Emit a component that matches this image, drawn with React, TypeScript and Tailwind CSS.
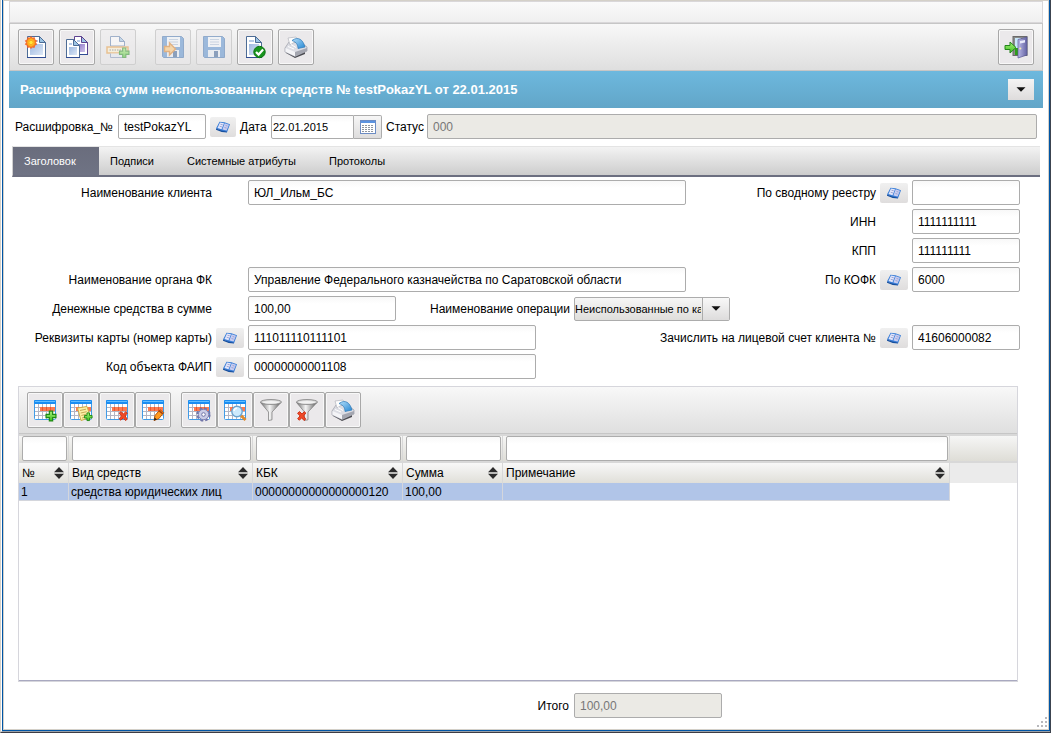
import type { ReactNode } from "react";

/* ---------- icons ---------- */

function Icon({ children, faded }: { children: ReactNode; faded?: boolean }) {
  return (
    <svg width="24" height="24" viewBox="0 0 24 24" aria-hidden="true" className={faded ? "opacity-50" : ""}>
      {children}
    </svg>
  );
}

function Gradients() {
  return (
    <svg width="0" height="0" className="absolute" aria-hidden="true">
      <defs>
        <linearGradient id="sheet" x1="0" y1="0" x2="1" y2="1">
          <stop offset="0" stopColor="#9db8e0" />
          <stop offset="1" stopColor="#dde8f7" />
        </linearGradient>
        <linearGradient id="violet" x1="0" y1="0" x2="1" y2="1">
          <stop offset="0" stopColor="#8d74c8" />
          <stop offset="1" stopColor="#cfc4ea" />
        </linearGradient>
        <linearGradient id="metal" x1="0" y1="0" x2="1" y2="0">
          <stop offset="0" stopColor="#6e6e6e" />
          <stop offset="0.45" stopColor="#f4f4f4" />
          <stop offset="1" stopColor="#5e5e5e" />
        </linearGradient>
        <linearGradient id="dome" x1="0" y1="0" x2="1" y2="1">
          <stop offset="0" stopColor="#b5e0fb" />
          <stop offset="1" stopColor="#2486d2" />
        </linearGradient>
        <linearGradient id="door" x1="0" y1="0" x2="1" y2="0">
          <stop offset="0" stopColor="#b9b8e6" />
          <stop offset="1" stopColor="#6463a4" />
        </linearGradient>
        <linearGradient id="leaf" x1="0" y1="0" x2="0" y2="1">
          <stop offset="0" stopColor="#a6f07a" />
          <stop offset="1" stopColor="#3fbf1f" />
        </linearGradient>
        <radialGradient id="burst">
          <stop offset="0" stopColor="#ffef4a" />
          <stop offset="0.45" stopColor="#ffc21f" />
          <stop offset="1" stopColor="#f4581b" />
        </radialGradient>
      </defs>
    </svg>
  );
}

function Plus({ x, y, s = 1 }: { x: number; y: number; s?: number }) {
  return (
    <path
      transform={`translate(${x} ${y}) scale(${s})`}
      d="M3.500 .5h3v3h3v3h-3v3h-3v-3h-3v-3h3z"
      fill="url(#leaf)"
      stroke="#1f8a17"
      strokeWidth="1.100"
    />
  );
}

function Cross({ x, y }: { x: number; y: number }) {
  return (
    <path
      transform={`translate(${x} ${y})`}
      d="M.6 2.200 2.600.6 4.900 3 7.300.7 8.800 2 6.600 4.900 8.700 8.200 7 9.500 4.700 6.800 2.400 9.200.7 7.800 3 4.900z"
      fill="#f04a28"
      stroke="#cf3216"
    />
  );
}

function Page({
  x,
  y,
  w = 17,
  h = 20,
  tone = "#4d6c96",
  fill = "url(#sheet)",
}: {
  x: number;
  y: number;
  w?: number;
  h?: number;
  tone?: string;
  fill?: string;
}) {
  return (
    <g transform={`translate(${x} ${y})`}>
      <path d={`M.5 .5H${w - 5.5}L${w + 0.5} 6.500V${h + 0.5}H.5z`} fill="#fff" stroke={tone} />
      <path d={`M0 ${h + 0.5}H${w + 1}`} stroke="#2f4c94" />
      <rect x="3" y="4" width={w - 10} height="2" fill="#b8cbe8" />
      <rect x="3" y="8" width={w - 5} height={h - 10} fill={fill} />
      <path d={`M${w - 5.5} .5V6.500H${w + 0.5}z`} fill="#9cc4e4" stroke={tone} />
    </g>
  );
}

const NewDocIcon = () => (
  <Icon>
    <Page x={3} y={1} w={18} h={21} />
    <path
      d="m7 1.500 1.400 1.600 2.100-.4.200 2.100 1.900.9-1 1.800 1 1.900-2 .9-.3 2.100-2-.4L7 13.500 5.600 12l-2.100.4-.2-2.100-1.900-.9 1-1.900-1-1.800 2-.9.300-2.100 2 .4z"
      fill="url(#burst)"
      stroke="#f2602a"
      strokeWidth=".8"
    />
    <circle cx="7" cy="7.500" r="2.200" fill="#ffe63a" stroke="#fb9b1c" strokeWidth=".8" />
  </Icon>
);

const CopyDocIcon = () => (
  <Icon>
    <Page x={9} y={1} w={13} h={18} tone="#5d4290" fill="url(#violet)" />
    <Page x={1} y={4} w={13} h={18} />
  </Icon>
);

const AddPrintIcon = () => (
  <Icon faded>
    <path d="M4.500 11V1.500h9l5 5V11z" fill="#fff" stroke="#5577a8" />
    <path d="M13.500 1.500v5h5z" fill="#9cc4e4" stroke="#5577a8" />
    <path d="M1 12h21v6H1z" fill="#fff3cf" stroke="#e89a3c" strokeWidth="1.500" />
    <path d="M3.500 15h16" stroke="#9a9a90" strokeWidth="1.500" strokeDasharray="1.500 1" />
    <path d="M4.500 18.500v4h14v-4" fill="#e4ebf5" stroke="#7a8fb5" />
    <Plus x={13} y={12.500} s={1.050} />
  </Icon>
);

function Floppy() {
  return (
    <>
      <path d="M1.500 1.500h19l2 2v19h-20l-1-1z" fill="#4e88cc" stroke="#3a6cab" />
      <rect x="6" y="2" width="13" height="10" fill="#f4f8fd" />
      <path d="M8 4.500h9M8 7h9M8 9.500h9" stroke="#a9bdd8" />
      <rect x="6" y="15" width="12" height="7" fill="#e9eff7" />
      <rect x="12" y="16" width="4" height="6" fill="#2e588f" />
    </>
  );
}

const SaveAsIcon = () => (
  <Icon faded>
    <Floppy />
    <path d="M3.500 11.500h5V8l6 6-6 6v-3.500h-5z" fill="#ffc46b" stroke="#d97a1c" strokeWidth="1.400" />
  </Icon>
);

const SaveIcon = () => (
  <Icon faded>
    <Floppy />
  </Icon>
);

const CheckDocIcon = () => (
  <Icon>
    <Page x={3} y={1} w={15} h={21} />
    <circle cx="16.500" cy="17" r="5.700" fill="#18941d" stroke="#0c7312" />
    <path d="m13 17 2.600 2.600 4.500-5" fill="none" stroke="#fff" strokeWidth="2.200" />
  </Icon>
);

const PrinterIcon = () => (
  <Icon>
    <path d="m2 16 9 5 10-5v3l-10 4-9-5z" fill="#4a4a50" />
    <path d="m1 13 4-6L18 8l5 4v4l-12 5.500L1 17z" fill="#dcdde4" stroke="#9a9ca6" strokeWidth=".7" />
    <path d="m1.500 13 9.500 4v4.200l-9.500-4.500z" fill="#f4f4f7" />
    <path d="m11 17 12-4v3l-12 5.200z" fill="#a4a6b0" />
    <path d="m4 3 8-1 2 3-8 5z" fill="#fdfdfd" stroke="#b3b5bd" strokeWidth=".7" />
    <path d="M8 5.500c6-4.500 11-1 13 6.500l-7 1.500c0-4-2-6.500-6-8z" fill="url(#dome)" stroke="#2c79b8" strokeWidth=".7" />
    <path d="m4 11.500 6 2.500M7 9.500l5 3" stroke="#fff" />
  </Icon>
);

const ExitIcon = () => (
  <Icon>
    <rect x="9" y="1.500" width="14" height="19" fill="#8b8b8b" stroke="#6a6a6a" />
    <rect x="11" y="3" width="6" height="10" fill="#c8e8fb" />
    <rect x="11" y="13" width="6" height="7" fill="#2f9e1b" />
    <path d="M14 4.500 23 2v18l-9 3z" fill="url(#door)" stroke="#5a5994" strokeWidth=".7" />
    <path d="m16 6 5-1v2.500l-5 1z" fill="#e8e9fb" />
    <circle cx="16.300" cy="13.500" r="1.100" fill="#f5e9b0" />
    <path d="M1 10.500h5V7l6 5.500L6 18v-3.500H1z" fill="url(#leaf)" stroke="#23851a" />
  </Icon>
);

function Sheet({ children }: { children?: ReactNode }) {
  return (
    <Icon>
      <rect x="1.500" y="2.500" width="21" height="19" rx="1" fill="#fff" stroke="#3f9be8" />
      <path d="M2 9.500h20M2 13.500h20M2 17.500h20M5.500 6v15M9.500 6v15M13.500 6v15M17.500 6v15" stroke="#b4b5c4" />
      <rect x="7" y="9" width="15" height="4" fill="#ff7a4e" />
      <path d="M9.500 9v4M13.500 9v4M17.500 9v4" stroke="#e95a30" />
      <rect x="1" y="2" width="22" height="4" rx="1" fill="#1a8df2" />
      <path d="M2 3.500h20" stroke="#62bdff" />
      {children}
    </Icon>
  );
}

const RowAddIcon = () => (
  <Sheet>
    <Plus x={12.500} y={12.500} s={1.100} />
  </Sheet>
);

const RowCopyIcon = () => (
  <Sheet>
    <path d="m8.500 10 9.500-1.500 3.500 11-9.500 3z" fill="#fdf0a6" stroke="#cfae48" />
    <path d="m11 12.500 6-1.300M11.700 15l6-1.300M12.400 17.500l5-1.300M13 20l3-.8" stroke="#c8ab58" />
    <Plus x={15} y={14.500} s={0.850} />
  </Sheet>
);

const RowDeleteIcon = () => (
  <Sheet>
    <Cross x={13.500} y={13} />
  </Sheet>
);

const RowEditIcon = () => (
  <Sheet>
    <path d="m13 22.500 1-5 5-5.800 3.700 3-4.900 6z" fill="#ff9a1f" stroke="#b4560d" />
    <path d="m13 22.500.6-3 2.400 2z" fill="#222" />
    <path d="m18 12.800 3.700 3" stroke="#a03a10" strokeWidth="1.400" />
  </Sheet>
);

const TableSettingsIcon = () => (
  <Sheet>
    <circle cx="16.500" cy="16.500" r="5.600" fill="none" stroke="#7175a8" strokeWidth="3" strokeDasharray="2.600 1.800" />
    <circle cx="16.500" cy="16.500" r="5.200" fill="#c9cce6" stroke="#7f83b4" />
    <circle cx="16.500" cy="16.500" r="1.800" fill="#fff" stroke="#7175a8" />
  </Sheet>
);

const TableSearchIcon = () => (
  <Sheet>
    <path d="m18 17.500 4.500 4.500" stroke="#e08a2c" strokeWidth="2.800" />
    <circle cx="14" cy="13.500" r="5.200" fill="#cdeafd" stroke="#6da4cf" strokeWidth="1.400" />
    <path d="M11 13a3 3 0 0 1 3-2.700" stroke="#fff" strokeWidth="1.400" fill="none" />
  </Sheet>
);

function Funnel() {
  return (
    <>
      <path d="M1.500 4.500 9.500 14v8.500l3.500-.7V14l9-9.500z" fill="url(#metal)" stroke="#777" strokeWidth=".7" />
      <ellipse cx="12" cy="4" rx="10.500" ry="2.400" fill="#dedede" stroke="#777" strokeWidth=".8" />
      <ellipse cx="12" cy="4.300" rx="8" ry="1.300" fill="#f2f2f2" />
    </>
  );
}

const FilterIcon = () => (
  <Icon>
    <Funnel />
  </Icon>
);

const FilterClearIcon = () => (
  <Icon>
    <Funnel />
    <Cross x={2} y={13} />
  </Icon>
);

const BookIcon = () => (
  <svg width="16" height="12" viewBox="0 0 16 12" aria-hidden="true">
    <path d="m4.500.8 5 .4 5.500 2-3 8-5-1L1 7.500z" fill="#3b7fd8" />
    <path d="m1 7.500 5.500 2 5 1 .5 1-5.300-.6L1 8.700z" fill="#174f9e" />
    <path d="m5 1.500 4 .8-2.500 6L2.500 7z" fill="#e3e6fa" />
    <path d="m9.700 2.200 4.300 1.600-2.400 5.700-4.200-1z" fill="#c9cdf0" />
    <path d="m5.500 3.300 2.300.5M4.700 5.300l2.300.6M10.500 4.400l2 .7M9.500 6.500l2.100.6" stroke="#8f98cc" strokeWidth=".8" />
  </svg>
);

const CalendarIcon = () => (
  <svg width="16" height="14" viewBox="0 0 16 14" aria-hidden="true">
    <rect x=".5" y=".5" width="15" height="13" fill="#fff" stroke="#6c8cc4" />
    <rect x="1" y="1" width="14" height="2" fill="#5b93e0" />
    <path d="M2 5.500h12M2 7.500h12M2 9.500h12M2 11.500h12" stroke="#8f959e" strokeDasharray="2 1" />
  </svg>
);

const CaretIcon = () => (
  <svg width="10" height="5" viewBox="0 0 10 5" aria-hidden="true">
    <path d="M.5 .3h9L5 4.800z" fill="#111" />
  </svg>
);

const SortIcon = () => (
  <svg width="10" height="12" viewBox="0 0 10 12" aria-hidden="true">
    <path d="M0 5.200 5 0l5 5.200zM0 6.800h10L5 12z" fill="#2b2b2b" />
  </svg>
);

/* ---------- controls ---------- */

function ToolButton({ label, disabled, children }: { label: string; disabled?: boolean; children: ReactNode }) {
  return (
    <button
      type="button"
      aria-label={label}
      disabled={disabled}
      className={
        disabled
          ? "flex size-9 shrink-0 items-center justify-center rounded-xs border border-[#cfcfcf] bg-[#ebe9eb]/60"
          : "flex size-9 shrink-0 items-center justify-center rounded-xs border border-[#a8a8a8] bg-[#ebe9eb] shadow-[inset_0_0_0_1px_#f8f8f8]"
      }
    >
      {children}
    </button>
  );
}

function LookupButton({ label }: { label: string }) {
  return (
    <button
      type="button"
      aria-label={label}
      className="flex h-5 w-full items-center justify-center rounded-xs bg-linear-to-b from-[#f0f0f0] to-[#dfdddd]"
    >
      <BookIcon />
    </button>
  );
}

const field =
  "h-[25px] min-w-0 rounded-xs border border-[#acacac] bg-linear-to-b from-[#f8f8f8] to-white to-30% px-[5px] text-black outline-none";
const fieldDisabled =
  "h-[25px] min-w-0 rounded-xs border border-[#acacac] bg-[#ebeae5] px-[5px] text-[#777] outline-none";

function Cell({
  id,
  label,
  value,
  lookup,
  labelClass,
  inputClass,
}: {
  id: string;
  label: string;
  value: string;
  lookup?: boolean;
  labelClass: string;
  inputClass: string;
}) {
  return (
    <div className="flex items-center gap-1">
      <label htmlFor={id} className={`whitespace-nowrap text-right ${labelClass}`}>
        {label}
      </label>
      <div className="w-7 shrink-0">{lookup && <LookupButton label={`Выбрать: ${label}`} />}</div>
      <input id={id} type="text" defaultValue={value} className={`${field} ${inputClass}`} />
    </div>
  );
}

/* ---------- data ---------- */

const tabs = ["Подписи", "Системные атрибуты", "Протоколы"];

const columns = [
  { title: "№", value: "1" },
  { title: "Вид средств", value: "средства юридических лиц" },
  { title: "КБК", value: "00000000000000000120" },
  { title: "Сумма", value: "100,00" },
  { title: "Примечание", value: "" },
];

const leftLabel = "w-[203px] shrink-0";

/* ---------- page ---------- */

export default function App() {
  return (
    <div className="flex min-h-screen flex-col border-r border-b border-l border-r-[#3c4450] border-b-[#3c3c44] border-l-[#d4d0c8] font-['Liberation_Sans',Arial,sans-serif] text-[12px] leading-4 text-black">
      <Gradients />
      <div className="flex flex-1 flex-col border-b border-l border-b-[#9aa0a8] border-l-white">
        <div className="flex flex-1 flex-col border-x border-b border-[#0055a5]">
          <main className="relative flex flex-1 flex-col border border-[#d4d0c8] bg-white px-[5px] pb-[11px]">
            <div className="h-[22px] shrink-0 border border-[#d9d7d9] bg-linear-to-b from-[#fafafa] to-[#f0f0f0]" />

            <header>
              <div className="flex h-12 items-center gap-[5px] border border-[#c6c6c6] bg-linear-to-b from-[#f8f8f8] to-[#dfdfdf] px-2">
                <ToolButton label="Создать"><NewDocIcon /></ToolButton>
                <ToolButton label="Копировать"><CopyDocIcon /></ToolButton>
                <ToolButton label="Добавить" disabled><AddPrintIcon /></ToolButton>
                <div className="w-[9px]" />
                <ToolButton label="Сохранить и закрыть" disabled><SaveAsIcon /></ToolButton>
                <ToolButton label="Сохранить" disabled><SaveIcon /></ToolButton>
                <ToolButton label="Проверить"><CheckDocIcon /></ToolButton>
                <ToolButton label="Печать"><PrinterIcon /></ToolButton>
                <div className="flex-1" />
                <ToolButton label="Выход"><ExitIcon /></ToolButton>
              </div>
              <div className="flex h-[37px] items-center justify-between bg-linear-to-b from-[#6db8de] to-[#62a6c8] pr-[9px] pl-[11px]">
                <h1 className="text-[13px] font-bold text-white">
                  Расшифровка сумм неиспользованных средств № testPokazYL от 22.01.2015
                </h1>
                <button
                  type="button"
                  aria-label="Меню документа"
                  className="flex h-[21px] w-[26px] items-center justify-center bg-linear-to-b from-[#f4f4f4] to-[#dedcdc]"
                >
                  <CaretIcon />
                </button>
              </div>
            </header>

            <div className="flex h-[37px] items-center gap-1 px-[6px]">
              <label htmlFor="number" className="w-[99px] shrink-0 whitespace-nowrap">Расшифровка_№</label>
              <input id="number" type="text" defaultValue="testPokazYL" className={`${field} w-[88px] shrink-0`} />
              <div className="w-[26px] shrink-0">
                <LookupButton label="Выбрать расшифровку" />
              </div>
              <label htmlFor="date" className="w-[27px] shrink-0">Дата</label>
              <div className="flex shrink-0">
                <input
                  id="date"
                  type="text"
                  defaultValue="22.01.2015"
                  className="h-6 w-[83px] rounded-l-xs border border-[#acacac] bg-linear-to-b from-[#f8f8f8] to-white to-30% px-px text-[11px] outline-none"
                />
                <button
                  type="button"
                  aria-label="Календарь"
                  className="flex h-6 w-7 items-center justify-center rounded-r-xs border border-l-0 border-[#acacac] bg-linear-to-b from-[#f6f6f6] to-[#dedddd]"
                >
                  <CalendarIcon />
                </button>
              </div>
              <label htmlFor="status" className="w-[37px] shrink-0">Статус</label>
              <input id="status" type="text" disabled defaultValue="000" className={`${fieldDisabled} flex-1`} />
            </div>

            <nav className="mt-px mr-[3px] ml-[3px] flex h-[31px] border-t border-b-2 border-l border-t-[#e4e4e4] border-b-[#6c6f80] border-l-[#d0d0d0] bg-linear-to-b from-[#f3f3f3] to-[#cdcdcd] text-[11px]">
              <button type="button" className="w-[86px] bg-linear-to-b from-[#6a6d7d] to-[#6f7384] pl-[11px] text-left text-white">
                Заголовок
              </button>
              {tabs.map((tab) => (
                <button key={tab} type="button" className="pr-[22px] pl-[11px] text-left">
                  {tab}
                </button>
              ))}
            </nav>

            <form className="mt-[3px] flex flex-col gap-1 pr-[23px]">
              <div className="flex justify-between">
                <Cell id="client" label="Наименование клиента" value="ЮЛ_Ильм_БС" labelClass={leftLabel} inputClass="w-[438px]" />
                <Cell id="registry" label="По сводному реестру" value="" lookup labelClass="" inputClass="w-[108px]" />
              </div>
              <div className="flex justify-end">
                <Cell id="inn" label="ИНН" value="1111111111" labelClass="" inputClass="w-[108px]" />
              </div>
              <div className="flex justify-end">
                <Cell id="kpp" label="КПП" value="111111111" labelClass="" inputClass="w-[108px]" />
              </div>
              <div className="flex justify-between">
                <Cell
                  id="treasury"
                  label="Наименование органа ФК"
                  value="Управление Федерального казначейства по Саратовской области"
                  labelClass={leftLabel}
                  inputClass="w-[438px]"
                />
                <Cell id="kofk" label="По КОФК" value="6000" lookup labelClass="" inputClass="w-[108px]" />
              </div>
              <div className="flex items-center">
                <Cell id="sum" label="Денежные средства в сумме" value="100,00" labelClass={leftLabel} inputClass="w-[148px]" />
                <label htmlFor="operation" className="w-[178px] pr-1 text-right whitespace-nowrap">
                  Наименование операции
                </label>
                <div className="relative flex">
                  <select
                    id="operation"
                    className="h-6 w-[156px] appearance-none rounded-xs border border-[#acacac] bg-linear-to-b from-[#f6f6f6] to-[#dfdedb] pr-7 pl-0 text-[11px] outline-none"
                  >
                    <option>Неиспользованные по картам</option>
                  </select>
                  <span className="pointer-events-none absolute inset-y-px right-px flex w-[27px] items-center justify-center border-l border-[#acacac] bg-linear-to-b from-[#f8f8f8] to-[#dddcdc]">
                    <CaretIcon />
                  </span>
                </div>
              </div>
              <div className="flex justify-between">
                <Cell id="card" label="Реквизиты карты (номер карты)" value="111011110111101" lookup labelClass={leftLabel} inputClass="w-[288px]" />
                <Cell id="account" label="Зачислить на лицевой счет клиента №" value="41606000082" lookup labelClass="" inputClass="w-[108px]" />
              </div>
              <div className="flex">
                <Cell id="faip" label="Код объекта ФАИП" value="00000000001108" lookup labelClass={leftLabel} inputClass="w-[288px]" />
              </div>
            </form>

            <section className="mt-[7px] mr-[25px] ml-[9px] flex flex-1 flex-col border border-[#d6d6dc]">
              <div className="flex h-[47px] shrink-0 items-center gap-[10px] border-b border-[#c6c6c6] bg-linear-to-b from-[#f8f8f8] to-[#dfdfdf] pl-2">
                <div className="flex">
                  <ToolButton label="Добавить строку"><RowAddIcon /></ToolButton>
                  <ToolButton label="Копировать строку"><RowCopyIcon /></ToolButton>
                  <ToolButton label="Удалить строку"><RowDeleteIcon /></ToolButton>
                  <ToolButton label="Изменить строку"><RowEditIcon /></ToolButton>
                </div>
                <div className="flex">
                  <ToolButton label="Настройка таблицы"><TableSettingsIcon /></ToolButton>
                  <ToolButton label="Поиск"><TableSearchIcon /></ToolButton>
                  <ToolButton label="Фильтр"><FilterIcon /></ToolButton>
                  <ToolButton label="Сбросить фильтр"><FilterClearIcon /></ToolButton>
                  <ToolButton label="Печать таблицы"><PrinterIcon /></ToolButton>
                </div>
              </div>
              <div className="flex-1 border-b border-[#a9a9c0]">
                <table className="w-full table-fixed border-separate border-spacing-0">
                  <colgroup>
                    <col className="w-[50px]" />
                    <col className="w-[184px]" />
                    <col className="w-[150px]" />
                    <col className="w-[100px]" />
                    <col className="w-[447px]" />
                    <col />
                  </colgroup>
                  <thead>
                    <tr className="h-[29px] bg-linear-to-b from-[#f8f8f8] to-[#dcdbd4]">
                      {columns.map((c) => (
                        <td key={c.title} className="border-t-2 border-r border-b-2 border-[#d8d8d8] p-0 pr-px pl-[3px] align-middle">
                          <input type="text" aria-label={`Фильтр: ${c.title}`} className={`${field} block w-full`} />
                        </td>
                      ))}
                      <td className="border-t-2 border-b-2 border-[#d8d8d8] p-0" />
                    </tr>
                    <tr className="h-5 bg-[#ebebeb]">
                      {columns.map((c) => (
                        <th
                          key={c.title}
                          className="border-r border-[#d8d8d8] bg-linear-to-b from-[#f8f8f8] to-[#e0dfd9] p-0 pr-1 pl-[3px] text-left font-normal"
                        >
                          <div className="flex items-center justify-between">
                            {c.title}
                            <SortIcon />
                          </div>
                        </th>
                      ))}
                      <td className="p-0" />
                    </tr>
                  </thead>
                  <tbody>
                    <tr className="h-[18px]">
                      {columns.map((c) => (
                        <td
                          key={c.title}
                          className="overflow-hidden border-r border-b border-[#d4d6dc] bg-[#b1c5e8] p-0 pl-[2px] whitespace-nowrap"
                        >
                          {c.value}
                        </td>
                      ))}
                      <td className="p-0" />
                    </tr>
                  </tbody>
                </table>
              </div>
            </section>

            <footer className="mt-[11px] flex items-center gap-[5px]">
              <label htmlFor="total" className="w-[560px] text-right">Итого</label>
              <input id="total" type="text" disabled defaultValue="100,00" className={`${fieldDisabled} w-[148px]`} />
            </footer>

            <svg width="10" height="10" viewBox="0 0 10 10" aria-hidden="true" className="absolute right-px bottom-[2px]">
              <path d="M8 0h2v2H8zM4 4h2v2H4zM8 4h2v2H8zM0 8h2v2H0zM4 8h2v2H4zM8 8h2v2H8z" fill="#b8b8bc" />
            </svg>
          </main>
        </div>
      </div>
    </div>
  );
}
